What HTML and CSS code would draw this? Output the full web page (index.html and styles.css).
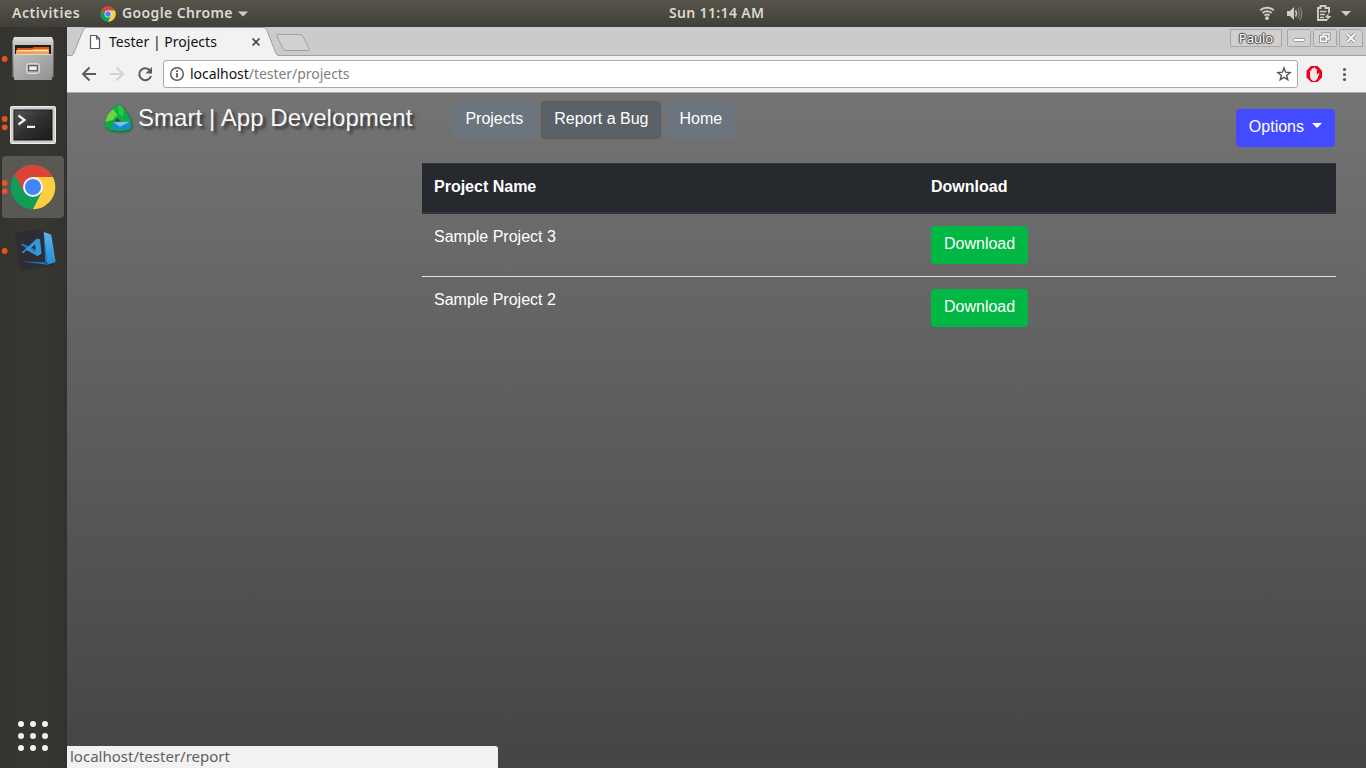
FILE: index.html
```html
<!DOCTYPE html>
<html lang="en">
<head>
<meta charset="utf-8">
<title>Tester | Projects</title>
<link rel="stylesheet" href="styles.css">
</head>
<body>
<svg class="defs" aria-hidden="true">
  <defs>
    <symbol id="chrome" viewBox="0 0 46 46">
      <circle cx="23" cy="23" r="22.3" fill="#109d58"/>
      <path d="M23 23 3.700 11.900A22.300 22.300 0 0 1 42.900 13H23z" fill="#db4437"/>
      <path d="M23 13H42.900A22.300 22.300 0 0 1 23 45.300L31.700 28z" fill="#ffcd40"/>
      <path d="M4.500 10.500 14.300 28l9-15z" fill="#db4437"/>
      <circle cx="23" cy="23" r="10" fill="#f4f4f4"/>
      <circle cx="23" cy="23" r="8" fill="#4285f4"/>
    </symbol>
  </defs>
</svg>
<header class="topbar">
  <div class="topbar-left">
    <span class="activities">Activities</span>
    <svg class="mini-chrome" width="16" height="16"><use href="#chrome"/></svg>
    <span class="app-name">Google Chrome</span>
    <svg width="10" height="6"><path d="M0 .5h10L5 5.500z" fill="#cfcdc8"/></svg>
  </div>
  <span class="clock">Sun 11:14 AM</span>
  <svg class="tray" width="106" height="27" viewBox="1260 0 106 27" fill="none" stroke="#cfcdc8">
    <path d="M1260.200 10.200q6.800-4.800 13.600 0M1262.400 12.900q4.600-3.400 9.200 0M1264.500 15.500q2.500-1.900 5 0" stroke-width="1.900"/>
    <circle cx="1267" cy="18.200" r="1.900" fill="#cfcdc8" stroke="none"/>
    <path d="M1287 11h3l4-4v13l-4-4h-3z" fill="#cfcdc8" stroke="none"/>
    <path d="M1295.500 10.500q2 3 0 6" stroke-width="1.500"/>
    <path d="M1297.700 8.500q3.500 5 0 10M1299.800 6.800q4 6.700 0 13.400" stroke="#858279" stroke-width="1.200"/>
    <path d="M1327 20h-9V8h2.500V6h5v2h3.500v5" stroke-width="1.900"/>
    <path d="M1320 11.500h6.500M1320 14.500h5M1320 17.500h4" stroke-width="1.500"/>
    <path d="m1329 13-4.500 4.500h3l-1 3.500 4.800-5h-3z" fill="#cfcdc8" stroke="none"/>
    <path d="M1341 11h10l-5 5z" fill="#cfcdc8" stroke="none"/>
  </svg>
</header>
<div class="desktop">
  <aside class="dock">
    <svg width="67" height="741" viewBox="0 27 67 741">
      <defs>
        <linearGradient id="cab" x2="1" y2="1"><stop stop-color="#bdbdbd"/><stop offset="1" stop-color="#929292"/></linearGradient>
        <linearGradient id="top" x2="0" y2="1"><stop stop-color="#e2e2e2"/><stop offset=".25" stop-color="#b8b8b8"/><stop offset="1" stop-color="#858585"/></linearGradient>
        <linearGradient id="term" x2="1" y2="1"><stop stop-color="#555"/><stop offset=".5" stop-color="#303030"/><stop offset="1" stop-color="#1b1b1b"/></linearGradient>
        <linearGradient id="code" x2="0" y2="1"><stop stop-color="#56b4ee"/><stop offset="1" stop-color="#2a8bd2"/></linearGradient>
      </defs>
      <g fill="#e95420"><circle cx="4.700" cy="59" r="2.900"/><circle cx="4.700" cy="119" r="2.900"/><circle cx="4.700" cy="127.300" r="2.900"/></g>
      <path d="M14 37h38l1.500 4v36H12.500V41z" fill="url(#top)"/>
      <path d="M15 45h36v10H15z" fill="#251d18"/>
      <path d="M17 48h15l2-1h15v8H16z" fill="#d9571d"/>
      <path d="M16 50h16l2-1h15v7H16z" fill="#efa251"/>
      <path d="M18 50.700h30" stroke="#fff0cf"/>
      <path d="M15 54h36l1 1v24q0 1-1 1H15q-1 0-1-1V55z" fill="url(#cab)"/>
      <path d="M14.500 54.500h37" stroke="#d6d6d6"/>
      <rect x="26.500" y="63.500" width="13" height="10" rx="2" fill="#bbb" stroke="#dadada"/>
      <rect x="28.700" y="65.700" width="8.600" height="5" fill="#f0f0f0" stroke="#555" stroke-width="1.200"/>
      <rect x="10.500" y="106.500" width="45" height="37" rx="1" fill="#cecece" stroke="#eee"/>
      <rect x="14" y="110" width="38" height="30" fill="url(#term)" stroke="#191919"/>
      <path d="m18.500 115.500 6 4.500-6 4.500M27 126.800h8" fill="none" stroke="#eee" stroke-width="2.200"/>
      <rect x="2" y="156" width="62" height="62" rx="4" fill="#595853"/>
      <use href="#chrome" x="10" y="164" width="46" height="46"/>
      <g fill="#e95420"><circle cx="4.700" cy="183" r="2.900"/><circle cx="4.700" cy="191.300" r="2.900"/><circle cx="4.700" cy="251" r="2.900"/></g>
      <path d="m16 232.500 22-3q1 0 1.500 1l6 35q0 1-1 1.500l-23 4q-1 0-1.500-1l-5-36z" fill="#2d2d33"/>
      <path d="m39.500 230 12 4 2 32-9 1z" fill="#2d2d33"/>
      <path d="m21 244.500 1.500-1L40.500 252v2.500L37 256z" fill="#1d7dc4"/>
      <path fill-rule="evenodd" d="m21.500 252.500 15.500-14 3 .7 1.500 14.300-4 2.500-11-6-3 3zM30 249l6 3.500-1-8z" fill="#3297db"/>
      <path d="m21 261.500 24 .7 2.500 2.500z" fill="#1b79bf"/>
      <path d="m43.700 232 4 31-2.500-1z" fill="#1b79bf"/>
      <path d="m43.700 232 7.500 2.500 4.500 27.500-8.200 2.700z" fill="url(#code)"/>
      <g fill="#f2f2f2"><circle cx="21" cy="724" r="3"/><circle cx="33" cy="724" r="3"/><circle cx="45" cy="724" r="3"/><circle cx="21" cy="736" r="3"/><circle cx="33" cy="736" r="3"/><circle cx="45" cy="736" r="3"/><circle cx="21" cy="748" r="3"/><circle cx="33" cy="748" r="3"/><circle cx="45" cy="748" r="3"/></g>
    </svg>
  </aside>
  <section class="browser">
    <div class="tabstrip">
      <div class="tab">
        <svg class="tab-shape" width="250" height="29" viewBox="67 27 250 29">
          <path d="M67 56h4q2 0 3-3l9-22q1-3 3-3h178q2 0 3 3l8.500 22q1 3 4 3z" fill="#f2f2f2"/>
          <path d="M67 55.500h4q2 0 3-3l9-22q1-3 3-3h178q2 0 3 3l8.500 22q1 3 4 3h39" fill="none" stroke="#a0a0a0"/>
          <path d="M278 34.500h22q2 0 3 2l6 12q1 2-1 2h-22q-2 0-3-2l-6-12q-1-2 1-2z" fill="#d1d1d1" stroke="#a0a0a0"/>
          <path d="M90.500 35.500h6l3 3v10h-9zM96.500 35.500v3.500h3.500" fill="#fff" stroke="#58595c" stroke-width="1.200"/>
          <path d="m252.500 38.500 7 7m0-7-7 7" stroke="#444" stroke-width="1.600"/>
        </svg>
        <span class="tab-title">Tester | Projects</span>
      </div>
      <div class="window-buttons">
        <span class="user">Paulo</span>
        <svg width="80" height="20" viewBox="1286 28 80 20" fill="none">
          <g fill="#d0d0d0" stroke="#a5a5a5"><rect x="1287.500" y="29.500" width="23" height="17" rx="1"/><rect x="1313.500" y="29.500" width="23" height="17" rx="1"/><path d="M1339.500 29.500h20q3 0 3 3v14h-23z"/></g>
          <rect x="1293.500" y="38.500" width="11" height="3" rx="1" fill="#fff" stroke="#999"/>
          <g stroke="#888" stroke-width="3"><path d="M1323 34h6v5h-6zM1320.500 36.500h6v5h-6z"/><path d="m1347 34 8 8m0-8-8 8" stroke-width="3.500"/></g>
          <g stroke="#fff" stroke-width="1.300"><path d="M1323 34h6v5h-6z"/><path d="M1320.500 36.500h6v5h-6z" fill="#aaa"/><path d="m1347 34 8 8m0-8-8 8" stroke-width="1.800"/></g>
        </svg>
      </div>
    </div>
    <div class="toolbar">
      <svg width="78" height="22" viewBox="81 63 78 22" fill="none" stroke-width="2">
        <path d="M96 74H83.500M89.500 67.500 83 74l6.500 6.500" stroke="#5a5c61"/>
        <path d="M110 74h12.500M116.500 67.500 123 74l-6.500 6.500" stroke="#d1d2d4"/>
        <path d="M150 70.500A6 6 0 1 0 151 76" stroke="#5a5c61"/><path d="M152 67v6.500h-6.500z" fill="#5a5c61"/>
      </svg>
      <div class="address">
        <svg width="16" height="16" viewBox="0 0 16 16"><circle cx="8" cy="8" r="6.300" fill="none" stroke="#555" stroke-width="1.400"/><path d="M8 7v4.500M8 4.200V6" stroke="#555" stroke-width="1.700"/></svg>
        <span class="url">localhost<span class="path">/tester/projects</span></span>
        <svg class="star" width="16" height="16" viewBox="0 0 16 16"><path d="m8 2 1.600 4.200 4.500.3-3.500 2.900 1.200 4.400L8 11.400l-3.800 2.400 1.200-4.400-3.500-2.900 4.500-.3z" fill="none" stroke="#505155" stroke-width="1.400"/></svg>
      </div>
      <svg width="60" height="20" viewBox="1303 64 60 20">
        <path d="m1311 66 6.500 0 4.500 4.700v6.600l-4.500 4.700H1311l-4.500-4.700v-6.600z" fill="#ed001c"/>
        <path d="M1310 75v-4q.8-1.500 1.500 0v-2q.9-1.500 1.800 0v-1q.9-1.500 1.800 0v1q1-1 1.700 0v6l1.600-2q1.300 0 .8 1.200l-2 4.800q-1 2-3 2-4 0-4.200-6z" fill="#f4e9e7"/>
        <g fill="#5a5c61"><circle cx="1344.500" cy="69.500" r="1.600"/><circle cx="1344.500" cy="74.500" r="1.600"/><circle cx="1344.500" cy="79.500" r="1.600"/></g>
      </svg>
    </div>
    <main class="page">
      <nav class="nav">
        <svg class="logo" width="32" height="36" viewBox="103 101 32 36">
          <g class="logo-mark">
            <path d="M117 105.500q2-1 4 1 8 7 10 17 1 5-3 6.500-9 2-17 0-5-1-6-5 1-10 9-18z" fill="#0bae47"/>
            <path d="M105.500 121q2-8 8-12l4.500 6-5 7-6 3q-2-1-1.500-4z" fill="#6bd53b"/>
            <path d="M113 109q3-4 6-3.500l1 9.500-2 1z" fill="#08b54a"/>
            <path d="M118 105.300q4 0 6 5l-1 7-4-3z" fill="#25cc35"/>
            <path d="m105 122 8-2 4-5-4 12-1 2q-6-1-7-5z" fill="#08ac46"/>
            <path d="m113.500 122 16.500-.3q2 5-1.500 7.300-8 1.500-16 0z" fill="#168bd2"/>
            <path d="m113.500 122 16.500-.3-10 5z" fill="#72c1e8"/>
            <path d="m117 117.500 4 4.300h-6.500z" fill="#37513d"/>
          </g>
        </svg>
        <span class="brand">Smart | App Development</span>
        <div class="links"><a class="btn gray">Projects</a><a class="btn gray active">Report a Bug</a><a class="btn gray">Home</a></div>
        <a class="btn options">Options<svg width="10" height="5"><path d="M0 0h10L5 5z" fill="#fff"/></svg></a>
      </nav>
      <table class="projects">
        <thead><tr><th class="name">Project Name</th><th>Download</th></tr></thead>
        <tbody>
          <tr><td>Sample Project 3</td><td><a class="btn green">Download</a></td></tr>
          <tr class="ruled"><td>Sample Project 2</td><td><a class="btn green">Download</a></td></tr>
        </tbody>
      </table>
      <div class="status">localhost/tester/report</div>
    </main>
  </section>
</div>
</body>
</html>
```
FILE: styles.css
```css
* { box-sizing: border-box; }
body { margin: 0; width: 1366px; height: 768px; overflow: hidden; font-family: "Noto Sans", sans-serif; }
svg { display: block; flex: none; }
.defs { position: absolute; width: 0; height: 0; }
.topbar { height: 27px; display: grid; grid-template-columns: 602px 163px 1fr; align-items: center; background: linear-gradient(#57544a, #403f39); color: #dbd9d4; font-size: 14px; font-weight: 600; line-height: 18px; white-space: nowrap; }
.topbar-left { display: flex; align-items: center; padding-left: 12px; }
.activities { width: 88px; letter-spacing: 0.57px; }
.mini-chrome { margin-right: 6px; }
.app-name { width: 116px; letter-spacing: 0.38px; }
.activities, .app-name, .clock { padding-bottom: 1px; }
.clock { width: 96px; margin-left: 67px; letter-spacing: 0.35px; }
.tray { justify-self: end; }
.desktop { display: flex; height: 741px; }
.dock { width: 67px; background: linear-gradient(90deg, #34332e, #383732 60%, #32312d); }
.browser { width: 1299px; display: flex; flex-direction: column; }
.tabstrip { height: 29px; display: flex; justify-content: space-between; background: #cbcbcb; border-bottom: 1px solid #a0a0a0; }
.tab { display: grid; height: 29px; }
.tab-shape, .tab-title { grid-area: 1 / 1; }
.tab-title { padding-left: 42px; line-height: 29px; font-size: 14px; color: #111; z-index: 1; letter-spacing: 0.02px; }
.window-buttons { display: flex; gap: 4px; padding-top: 1px; }
.user { width: 52px; height: 18px; margin-top: 1px; border: 1px solid #a5a5a5; border-radius: 1px; background: #d0d0d0; text-align: center; font-size: 13px; line-height: 16px; color: #fff; text-shadow: 1px 0 1px #444, -1px 0 1px #444, 0 1px 1px #444, 0 -1px 1px #444; }
.toolbar { height: 37px; display: flex; align-items: center; padding-left: 14px; background: #f2f2f2; border-bottom: 1px solid #adadad; }
.address { width: 1135px; height: 28px; margin: 0 5px 0 4px; padding: 0 5px; display: flex; align-items: center; border: 1px solid #a9a9a9; border-radius: 3px; background: #fff; }
.url { margin-left: 5px; font-size: 14px; line-height: 26px; color: #111; letter-spacing: -0.04px; }
.path { color: #808080; }
.star { margin-left: auto; }
.page { flex: 1; position: relative; background: linear-gradient(#747474, #444); font-family: "Liberation Sans", sans-serif; font-size: 16px; line-height: 24px; color: #fff; }
.nav { display: flex; align-items: flex-start; height: 70px; padding: 8px 31px 0 36px; }
.logo-mark { filter: drop-shadow(1.5px 1.5px 1.5px #00692c); }
.brand { width: 317.4px; padding-left: 3px; font-size: 24px; line-height: 34px; letter-spacing: 0.06px; color: #f8f8f8; text-shadow: 3px 3px 3px #333; white-space: nowrap; }
.links { display: flex; gap: 5px; }
.btn { display: block; height: 38px; padding: 5px 12px 7px; border: 1px solid transparent; border-radius: 4px; white-space: nowrap; }
.gray { background: #6c757d; }
.active { background: #5a6268; border-color: #545b62; }
.options { display: flex; gap: 8px; margin: 8px 0 0 auto; background: #424bff; }
.options svg { margin-top: 8px; }
.projects { width: 914px; margin-left: 355px; border-spacing: 0; table-layout: fixed; }
.projects th { height: 51px; padding: 11px 12px 12px; text-align: left; vertical-align: top; background: #26292e; border-top: 1px solid #32383e; border-bottom: 2px solid #32383e; }
.name { width: 497px; }
.projects td { height: 62px; padding: 11px 12px 12px; vertical-align: top; }
.projects .btn { width: 97px; margin-top: 1px; }
.ruled td { border-top: 1px solid #dee2e6; }
.green { background: #00b843; }
.status { position: absolute; left: 0; bottom: 0; width: 431px; height: 22px; padding-left: 3px; background: #f2f2f2; border-top-right-radius: 3px; font: 15px/20px "Noto Sans", sans-serif; color: #606060; }
```
